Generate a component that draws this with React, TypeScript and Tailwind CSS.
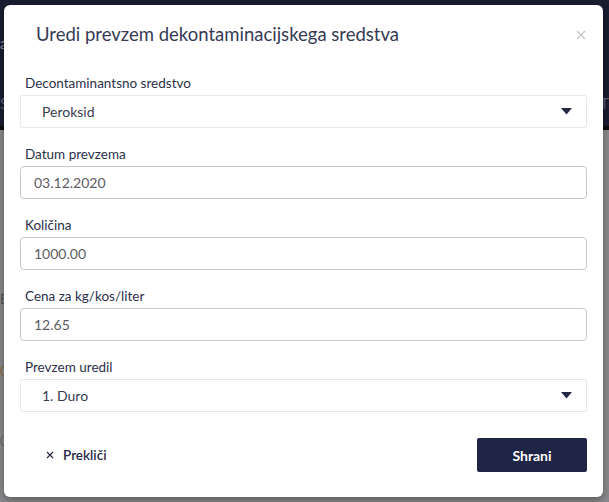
import React from "react";

const font = { fontFamily: "Lato, 'Noto Sans', sans-serif" };

const Caret = () => (
    <svg width="11" height="7" viewBox="0 0 11 7" className="shrink-0">
        <path d="M0 0 L11 0 L5.5 6.5 Z" fill="#232845" />
    </svg>
);

const SelectField = ({ label, value }: { label: string; value: string }) => (
    <div>
        <label className="block h-[18px] leading-[18px] pl-[5px] text-[13.5px] text-[#2c3049] mb-[3px]">{label}</label>
        <div className="h-[33px] flex items-center justify-between pl-[21px] pr-[14px] border border-[#e9e9ec] rounded-[2px] bg-white">
            <span className="text-[14px] text-[#3a3d4f]">{value}</span>
            <Caret />
        </div>
    </div>
);

const InputField = ({ label, value }: { label: string; value: string }) => (
    <div>
        <label className="block h-[18px] leading-[18px] pl-[5px] text-[13.5px] text-[#2c3049] mb-[3px]">{label}</label>
        <div className="h-[33px] flex items-center px-[13px] border border-[#c9c9cc] rounded-[4px] bg-white">
            <span className="text-[14px] text-[#5c5c63]">{value}</span>
        </div>
    </div>
);

export default function App() {
    return (
        <div className="relative w-[609px] h-[502px] overflow-hidden bg-[#8a8a8c]" style={font}>
            {/* dimmed page behind the dialog */}
            <div className="h-[126px] bg-[#1a1d30] relative">
                <span className="absolute left-0 top-[32px] text-[15px] text-[#8c8e9a]">a</span>
                <span className="absolute left-0 top-[92px] text-[15px] text-[#5d6070]">S</span>
                <span className="absolute left-[600px] top-[92px] text-[15px] text-[#5d6070]">T</span>
            </div>
            <div className="h-[4px] bg-[#0d0d0f]" />
            <div className="relative">
                <span className="absolute left-0 top-[160px] text-[13px] text-[#505058]">E</span>
                <span className="absolute left-0 top-[232px] text-[13px] text-[#8a6a40]">0</span>
                <span className="absolute left-0 top-[302px] text-[13px] text-[#6a6a74]">0</span>
            </div>

            {/* dialog */}
            <div className="absolute left-[4px] top-[5px] w-[599px] h-[492px] bg-white rounded-[6px] shadow-[0_3px_8px_rgba(0,0,0,0.35)] px-4">
                <div className="relative pt-[18px] h-[69px]">
                    <h2 className="pl-[16px] h-[22px] leading-[22px] text-[18.5px] text-[#363a55]">
                        Uredi prevzem dekontaminacijskega sredstva
                    </h2>
                    <button className="absolute right-[1px] top-[25px]">
                        <svg width="10" height="10" viewBox="0 0 10 10">
                            <path d="M1 1 L9 9 M9 1 L1 9" stroke="#c5c5c9" strokeWidth="1.2" />
                        </svg>
                    </button>
                </div>

                <div className="flex flex-col gap-[17px]">
                    <SelectField label="Decontaminantsno sredstvo" value="Peroksid" />
                    <InputField label="Datum prevzema" value="03.12.2020" />
                    <InputField label="Količina" value="1000.00" />
                    <InputField label="Cena za kg/kos/liter" value="12.65" />
                    <SelectField label="Prevzem uredil" value="1. Duro" />
                </div>

                <div className="flex items-center justify-between mt-[26px]">
                    <button className="flex items-center gap-[9px] pl-[26px] text-[13.5px] font-semibold text-[#262a45]">
                        <svg width="8" height="8" viewBox="0 0 8 8">
                            <path d="M1 1 L7 7 M7 1 L1 7" stroke="#262a45" strokeWidth="1.2" />
                        </svg>
                        Prekliči
                    </button>
                    <button className="w-[110px] h-[34px] rounded-[2px] bg-[#1f2545] text-white text-[14px] font-bold">
                        Shrani
                    </button>
                </div>
            </div>
        </div>
    );
}
